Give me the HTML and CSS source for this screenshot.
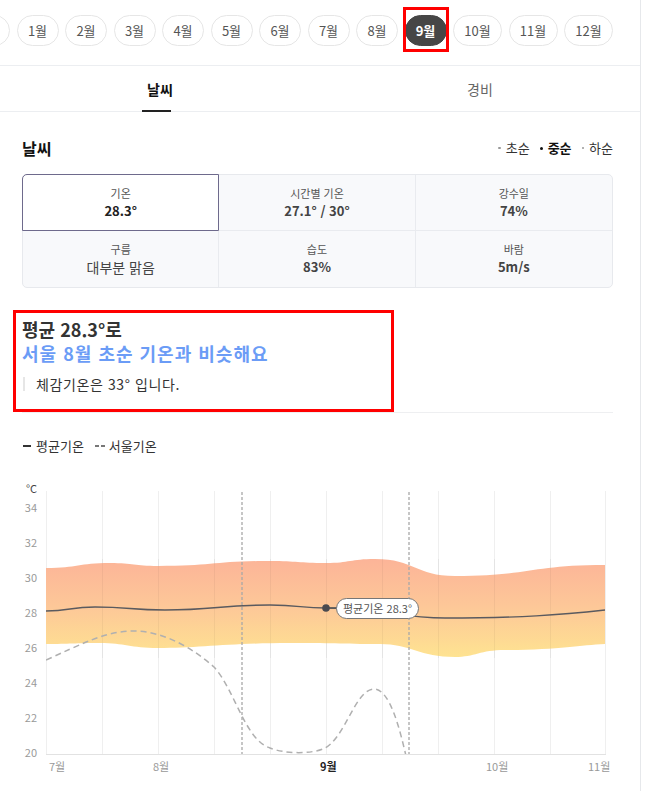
FILE: index.html
```html
<!DOCTYPE html>
<html lang="ko">
<head>
<meta charset="utf-8">
<title>날씨</title>
<link rel="stylesheet" href="styles.css">
</head>
<body>
<div class="page">
  <div class="months">
    <div class="months-track">
      <span class="pill pill-ghost"></span>
      <span class="pill">1월</span>
      <span class="pill">2월</span>
      <span class="pill">3월</span>
      <span class="pill">4월</span>
      <span class="pill">5월</span>
      <span class="pill">6월</span>
      <span class="pill">7월</span>
      <span class="pill">8월</span>
      <span class="pill active">9월</span>
      <span class="pill wide">10월</span>
      <span class="pill wide">11월</span>
      <span class="pill wide">12월</span>
    </div>
  </div>

  <div class="tabs">
    <div class="tab active"><span>날씨</span></div>
    <div class="tab"><span>경비</span></div>
  </div>

  <section class="weather">
    <div class="weather-head">
      <h2 class="title">날씨</h2>
      <ul class="period">
        <li>초순</li>
        <li class="on">중순</li>
        <li>하순</li>
      </ul>
    </div>

    <div class="stats">
      <div class="stat sel">
        <div class="stat-label">기온</div>
        <div class="stat-value strong">28.3°</div>
      </div>
      <div class="stat">
        <div class="stat-label">시간별 기온</div>
        <div class="stat-value">27.1° / 30°</div>
      </div>
      <div class="stat">
        <div class="stat-label">강수일</div>
        <div class="stat-value">74%</div>
      </div>
      <div class="stat">
        <div class="stat-label">구름</div>
        <div class="stat-value plain">대부분 맑음</div>
      </div>
      <div class="stat">
        <div class="stat-label">습도</div>
        <div class="stat-value">83%</div>
      </div>
      <div class="stat">
        <div class="stat-label">바람</div>
        <div class="stat-value">5m/s</div>
      </div>
    </div>

    <div class="summary">
      <h3 class="summary-title">평균 28.3°로<br><span class="hl">서울 8월 초순 기온과 비슷해요</span></h3>
      <p class="note">체감기온은 33° 입니다.</p>
    </div>

    <div class="legend">
      <span class="lg-item"><i class="lg-solid"></i>평균기온</span>
      <span class="lg-item"><i class="lg-dash"></i>서울기온</span>
    </div>
  </section>

  <svg class="chart" viewBox="0 470 640 321" width="640" height="321">
    <defs>
      <linearGradient id="band" x1="0" y1="559" x2="0" y2="657" gradientUnits="userSpaceOnUse">
        <stop offset="0" stop-color="#fcb498"/>
        <stop offset="0.5" stop-color="#fdc898"/>
        <stop offset="1" stop-color="#fee391"/>
      </linearGradient>
      <clipPath id="plot"><rect x="46" y="490" width="560" height="264"/></clipPath>
    </defs>

    <g stroke="#efefef" stroke-width="1">
      <line x1="46.5" y1="491" x2="46.5" y2="754"/>
      <line x1="102.5" y1="491" x2="102.5" y2="754"/>
      <line x1="158.5" y1="491" x2="158.5" y2="754"/>
      <line x1="214.5" y1="491" x2="214.5" y2="754"/>
      <line x1="270.5" y1="491" x2="270.5" y2="754"/>
      <line x1="326.5" y1="491" x2="326.5" y2="754"/>
      <line x1="382.5" y1="491" x2="382.5" y2="754"/>
      <line x1="438.5" y1="491" x2="438.5" y2="754"/>
      <line x1="494.5" y1="491" x2="494.5" y2="754"/>
      <line x1="550.5" y1="491" x2="550.5" y2="754"/>
      <line x1="605.5" y1="491" x2="605.5" y2="754"/>
    </g>

    <path fill="url(#band)" d="M46,568 C78,568 78,563 110,563 C134,563 134,566 158,566 C214,566 214,561 270,561 C298,561 298,563 326,563 C350,563 350,559 375,559 C415,559 415,576 455,576 C530,576 530,565 605,565 L605,644 C580,645 560,650 505,650 C480,650 475,657 455,657 C420,657 410,644 380,644 C340,644 330,643 290,643 C230,643 200,648 158,648 C130,648 125,643 100,643 C75,643 70,644 46,644 Z"/>

    <g stroke="rgba(0,0,0,0.045)" stroke-width="1">
      <line x1="102.5" y1="559" x2="102.5" y2="658"/>
      <line x1="158.5" y1="559" x2="158.5" y2="658"/>
      <line x1="214.5" y1="559" x2="214.5" y2="658"/>
      <line x1="270.5" y1="559" x2="270.5" y2="658"/>
      <line x1="326.5" y1="559" x2="326.5" y2="658"/>
      <line x1="382.5" y1="559" x2="382.5" y2="658"/>
      <line x1="438.5" y1="559" x2="438.5" y2="658"/>
      <line x1="494.5" y1="559" x2="494.5" y2="658"/>
      <line x1="550.5" y1="559" x2="550.5" y2="658"/>
    </g>

    <line x1="46" y1="754.5" x2="606" y2="754.5" stroke="#e2e2e2" stroke-width="1"/>

    <g stroke="#a8a8a8" stroke-width="1.3" stroke-dasharray="3 2">
      <line x1="242" y1="492" x2="242" y2="754"/>
      <line x1="409" y1="492" x2="409" y2="754"/>
    </g>

    <path fill="none" stroke="#5a5a5f" stroke-width="1.4" d="M46,611 C70,611 70,607 95,607 C130,607 130,610 165,610 C215,610 220,605 270,605 C300,605 300,608 326,608 C380,608 400,618 445,618 C520,618 560,615 605,610"/>

    <path clip-path="url(#plot)" fill="none" stroke="#b0b0b0" stroke-width="1.5" stroke-dasharray="6 4" d="M46,660 C80,645 105,631 133,631 C165,631 195,650 214,667 C235,690 245,740 270,748 C285,754 310,754 323,749 C345,740 355,689 374,689 C390,689 400,730 406,756"/>

    <line x1="326" y1="608" x2="337" y2="608" stroke="#555" stroke-width="1.3"/>
    <circle cx="326" cy="608" r="3.8" fill="#4a4a4f"/>
    <rect x="336.5" y="598.5" width="82" height="20" rx="10" fill="#fff" stroke="#777" stroke-width="1"/>
    <text class="tip" x="377.5" y="612.5" text-anchor="middle">평균기온 28.3°</text>

    <text class="unit" x="26" y="493">°C</text>
    <g class="ylab" text-anchor="end">
      <text x="37" y="512">34</text>
      <text x="37" y="547">32</text>
      <text x="37" y="582">30</text>
      <text x="37" y="617">28</text>
      <text x="37" y="652">26</text>
      <text x="37" y="687">24</text>
      <text x="37" y="722">22</text>
      <text x="37" y="757">20</text>
    </g>
    <g class="xlab">
      <text x="49" y="771">7월</text>
      <text x="153" y="771">8월</text>
      <text class="xon" x="320" y="771">9월</text>
      <text x="486" y="771">10월</text>
      <text x="588" y="771">11월</text>
    </g>
  </svg>
</div>
</body>
</html>
```

FILE: styles.css
```css
html, body {
  margin: 0;
  padding: 0;
  background: #fff;
  overflow: hidden;
}

body {
  font-family: "Noto Sans CJK KR", "Noto Sans", sans-serif;
  color: #333;
}

.page {
  width: 640px;
  height: 791px;
  border-right: 1px solid #e6e8eb;
  overflow: hidden;
}

/* month pills */
.months {
  height: 50px;
  padding-top: 15px;
  border-bottom: 1px solid #eceef1;
  overflow: hidden;
}

.months-track {
  display: flex;
  gap: 6.5px;
  margin-left: -32px;
}

.pill {
  flex: none;
  position: relative;
  box-sizing: border-box;
  width: 42px;
  height: 31px;
  border: 1px solid #e6e6e6;
  border-radius: 16px;
  font-size: 13px;
  line-height: 29px;
  text-align: center;
  color: #555;
  background: #fff;
}

.pill.wide {
  width: 49px;
}

.pill.active {
  background: #464646;
  border-color: #464646;
  color: #fff;
  font-weight: 700;
}

.pill.active::after {
  content: "";
  position: absolute;
  top: -9px;
  bottom: -7px;
  left: -3px;
  right: -3px;
  border: 3px solid #f00;
}

/* tabs */
.tabs {
  display: flex;
  height: 45px;
  border-bottom: 1px solid #eceef1;
}

.tab {
  flex: 1;
  display: flex;
  justify-content: center;
  align-items: center;
  font-size: 14px;
  color: #666;
}

.tab span {
  position: relative;
  line-height: 20px;
}

.tab.active {
  color: #111;
  font-weight: 700;
}

.tab.active span::after {
  content: "";
  position: absolute;
  left: -5px;
  right: 2px;
  bottom: -13px;
  height: 2px;
  background: #222;
}

/* weather section */
.weather {
  padding: 0 27px 0 22px;
}

.weather-head {
  display: flex;
  justify-content: space-between;
  align-items: center;
  margin-top: 26px;
  height: 20px;
}

.title {
  margin: 0;
  font-size: 16px;
  line-height: 20px;
  font-weight: 700;
  color: #111;
}

.period {
  display: flex;
  gap: 10px;
  margin: 0;
  padding: 0;
  list-style: none;
  font-size: 13px;
  line-height: 18px;
  color: #333;
}

.period li {
  display: flex;
  align-items: center;
  gap: 5px;
}

.period li::before {
  content: "";
  width: 2.5px;
  height: 2.5px;
  border-radius: 50%;
  background: #999;
}

.period li.on {
  color: #111;
  font-weight: 700;
}

.period li.on::before {
  background: #111;
  width: 3px;
  height: 3px;
}

/* stats grid */
.stats {
  display: grid;
  grid-template-columns: repeat(3, 1fr);
  grid-auto-rows: 56px;
  margin-top: 16px;
  border: 1px solid #e7e9ed;
  border-radius: 5px;
  background: #f8f9fb;
}

.stat {
  box-sizing: border-box;
  padding-top: 10px;
  text-align: center;
  border-right: 1px solid #e9ebef;
}

.stat:nth-child(-n+3) {
  border-bottom: 1px solid #e9ebef;
}

.stat:nth-child(3n) {
  border-right: none;
}

.stat.sel {
  margin: -1px 0 0 -1px;
  border: 1px solid #6e6a8c;
  border-radius: 5px 0 0 0;
  background: #fff;
}

.stat-label {
  font-size: 11px;
  line-height: 16px;
  color: #555;
}

.stat-value {
  font-size: 13px;
  line-height: 20px;
  font-weight: 700;
  color: #444;
}

.stat-value.strong {
  color: #222;
}

.stat-value.plain {
  font-size: 14px;
  font-weight: 400;
  color: #444;
}

/* summary */
.summary {
  position: relative;
  margin-top: 29px;
  padding-bottom: 21px;
  border-bottom: 1px solid #eeeff1;
}

.summary::after {
  content: "";
  position: absolute;
  top: -7px;
  bottom: 0;
  left: -9px;
  width: 375px;
  border: 3px solid #f00;
}

.summary-title {
  margin: 0;
  font-size: 18px;
  line-height: 24px;
  font-weight: 700;
  color: #333;
}

.hl {
  color: #6b9cf6;
  letter-spacing: 1px;
}

.note {
  margin: 12px 0 0 1px;
  padding-left: 11px;
  border-left: 2px solid #e6e6e6;
  font-size: 14px;
  line-height: 14px;
  letter-spacing: 0.6px;
  color: #333;
}

/* legend */
.legend {
  display: flex;
  align-items: center;
  gap: 11px;
  margin-top: 24px;
  font-size: 13px;
  line-height: 18px;
  color: #333;
}

.lg-item {
  display: flex;
  align-items: center;
}

.lg-solid {
  width: 8px;
  height: 2px;
  margin: 0 5px 0 1px;
  background: #333;
}

.lg-dash {
  width: 10px;
  height: 2px;
  margin-right: 4px;
  background: repeating-linear-gradient(90deg, #777 0 4px, transparent 4px 6px);
}

/* chart */
.chart {
  display: block;
  margin-top: 15px;
}

.chart text {
  font-family: "Noto Sans CJK KR", "Noto Sans", sans-serif;
  font-size: 11px;
}

.chart .ylab text,
.chart .xlab text {
  fill: #999;
}

.chart .xlab .xon {
  fill: #222;
  font-weight: 700;
}

.chart .unit {
  fill: #444;
}

.chart .tip {
  fill: #555;
}
```
